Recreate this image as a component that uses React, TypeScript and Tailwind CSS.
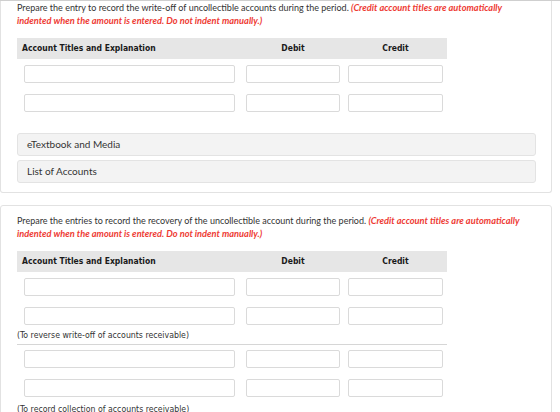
import React from 'react';

const lato = { fontFamily: 'Lato, "Open Sans", sans-serif' };

type Row = { id: string };

function EntryInputs() {
  return (
    <div className="flex pl-[7px]">
      <input className="w-[211px] h-[18px] border border-[#dadada] rounded-[2px] bg-white" />
      <input className="ml-[11px] w-[94px] h-[18px] border border-[#dadada] rounded-[2px] bg-white" />
      <input className="ml-[8px] w-[95px] h-[18px] border border-[#dadada] rounded-[2px] bg-white" />
    </div>
  );
}

function TableHeader() {
  return (
    <div className="flex h-[21px] items-center bg-[#e6e6e6] w-[430px] text-[8.5px] font-bold text-[#1a1a1a] font-['DejaVu_Sans_Condensed','DejaVu_Sans',sans-serif]">
      <span className="w-[229px] pl-[5px]">Account Titles and Explanation</span>
      <span className="w-[94px] text-center">Debit</span>
      <span className="ml-[8px] w-[95px] text-center">Credit</span>
    </div>
  );
}

function Prompt({ text }: { text: string }) {
  return (
    <div className="text-[9px] leading-[13px] text-[#333]" style={lato}>
      <div>
        {text}{' '}
        <span className="text-[9.25px] text-[#ee3a33] font-bold italic">(Credit account titles are automatically</span>
      </div>
      <div className="text-[9.25px] text-[#ee3a33] font-bold italic">
        indented when the amount is entered. Do not indent manually.)
      </div>
    </div>
  );
}

function Caption({ children }: { children: React.ReactNode }) {
  return (
    <div className="text-[8.7px] leading-[13px] text-[#333] font-['DejaVu_Sans_Condensed','DejaVu_Sans',sans-serif]">
      {children}
    </div>
  );
}

export default function App() {
  const firstEntry: Row[] = [{ id: 'a' }, { id: 'b' }];

  return (
    <div className="w-[560px] h-[412px] overflow-hidden bg-white border-t border-[#cfcfcf]">
      {/* write-off entry */}
      <div className="w-[552px] border-x border-b border-[#e2e2e2] rounded-b-[3px] px-4 pb-[9px]">
        <Prompt text="Prepare the entry to record the write-off of uncollectible accounts during the period." />

        <div className="mt-[11px]">
          <TableHeader />
          <div className="flex flex-col gap-[11px] mt-[6px]">
            {firstEntry.map((r) => (
              <EntryInputs key={r.id} />
            ))}
          </div>
        </div>

        <div className="mt-[21px] flex flex-col gap-[4px] w-[519px]" style={lato}>
          <div className="h-[23px] flex items-center px-[9px] bg-[#f3f3f3] border border-[#e3e3e3] rounded-[3px] text-[10px] text-[#333]">
            eTextbook and Media
          </div>
          <div className="h-[23px] flex items-center px-[9px] bg-[#f3f3f3] border border-[#e3e3e3] rounded-[3px] text-[10px] text-[#333]">
            List of Accounts
          </div>
        </div>
      </div>

      {/* recovery entries */}
      <div className="mt-[12px] w-[552px] border border-[#e2e2e2] rounded-t-[3px] px-4 pt-[8px]">
        <Prompt text="Prepare the entries to record the recovery of the uncollectible account during the period." />

        <div className="mt-[11px] w-[430px]">
          <TableHeader />
          <div className="flex flex-col gap-[11px] mt-[6px]">
            <EntryInputs />
            <EntryInputs />
          </div>
          <div className="mt-[2px] h-[18px] pt-[2px] border-b border-[#d6d6d6]">
            <Caption>(To reverse write-off of accounts receivable)</Caption>
          </div>
          <div className="flex flex-col gap-[11px] mt-[5px]">
            <EntryInputs />
            <EntryInputs />
          </div>
          <div className="mt-[6px]">
            <Caption>(To record collection of accounts receivable)</Caption>
          </div>
        </div>
      </div>
    </div>
  );
}
